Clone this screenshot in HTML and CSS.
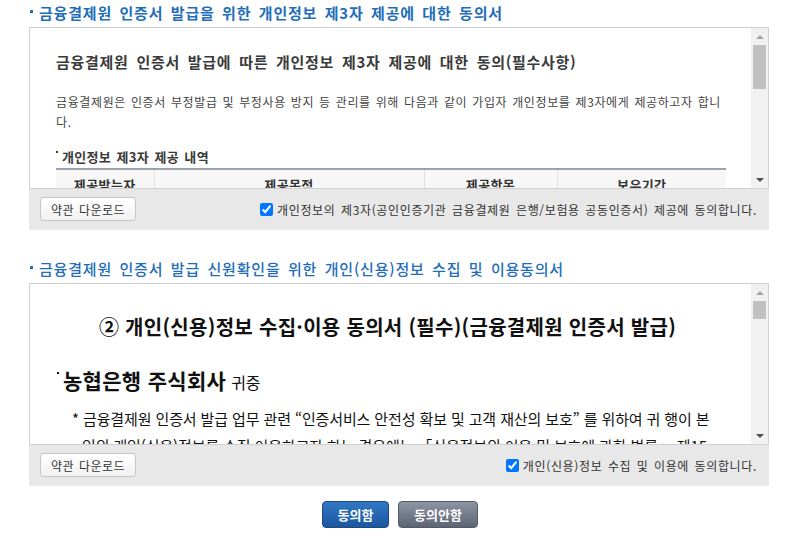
FILE: index.html
```html
<!DOCTYPE html>
<html lang="ko">
<head>
<meta charset="utf-8">
<title>동의서</title>
<link rel="stylesheet" href="styles.css">
</head>
<body>
<div class="page">
  <section class="agree">
    <h2 class="agree-title strong"><span class="title-dot"></span>금융결제원 인증서 발급을 위한 개인정보 제3자 제공에 대한 동의서</h2>
    <div class="agree-box">
      <div class="scroll">
        <div class="scroll-content doc1">
          <h3 class="doc1-head">금융결제원 인증서 발급에 따른 개인정보 제3자 제공에 대한 동의(필수사항)</h3>
          <p class="doc1-text">금융결제원은 인증서 부정발급 및 부정사용 방지 등 관리를 위해 다음과 같이 가입자 개인정보를 제3자에게 제공하고자 합니다.</p>
          <h4 class="doc1-sub"><span class="mini-dot"></span>개인정보 제3자 제공 내역</h4>
          <table class="doc1-table">
            <colgroup><col class="c1"><col class="c2"><col class="c3"><col class="c4"></colgroup>
            <thead>
              <tr><th>제공받는자</th><th>제공목적</th><th>제공항목</th><th>보유기간</th></tr>
            </thead>
          </table>
        </div>
        <div class="scrollbar">
          <div class="sb-btn"><span class="arrow-up"></span></div>
          <div class="sb-track"><div class="sb-thumb thumb1"></div></div>
          <div class="sb-btn"><span class="arrow-down"></span></div>
        </div>
      </div>
      <div class="agree-foot">
        <button class="btn-file" type="button">약관 다운로드</button>
        <label class="chk"><input type="checkbox" checked><span>개인정보의 제3자(공인인증기관 금융결제원 은행/보험용 공동인증서) 제공에 동의합니다.</span></label>
      </div>
    </div>
  </section>

  <section class="agree second">
    <h2 class="agree-title"><span class="title-dot"></span>금융결제원 인증서 발급 신원확인을 위한 개인(신용)정보 수집 및 이용동의서</h2>
    <div class="agree-box">
      <div class="scroll">
        <div class="scroll-content doc2">
          <h3 class="doc2-head">② 개인(신용)정보 수집·이용 동의서 (필수)(금융결제원 인증서 발급)</h3>
          <p class="doc2-to"><span class="mini-dot"></span><strong>농협은행 주식회사</strong> 귀중</p>
          <p class="doc2-text">* 금융결제원 인증서 발급 업무 관련 “인증서비스 안전성 확보 및 고객 재산의 보호” 를 위하여 귀 행이 본인의 개인(신용)정보를 수집·이용하고자 하는 경우에는 「신용정보의 이용 및 보호에 관한 법률」 제15조 제2항, 제32조 제1항, 제33조 및 제34조, 「개인정보 보호법」 제15조 제1항 제1호, 제24조 제1항 제1호에 따라 본인의 동의를 얻어야 합니다.</p>
        </div>
        <div class="scrollbar">
          <div class="sb-btn"><span class="arrow-up"></span></div>
          <div class="sb-track"><div class="sb-thumb thumb2"></div></div>
          <div class="sb-btn"><span class="arrow-down"></span></div>
        </div>
      </div>
      <div class="agree-foot">
        <button class="btn-file" type="button">약관 다운로드</button>
        <label class="chk"><input type="checkbox" checked><span>개인(신용)정보 수집 및 이용에 동의합니다.</span></label>
      </div>
    </div>
  </section>

  <div class="actions">
    <button class="btn-act btn-yes" type="button">동의함</button>
    <button class="btn-act btn-no" type="button">동의안함</button>
  </div>
</div>
</body>
</html>
```

FILE: styles.css
```css
* { box-sizing: border-box; }
html, body { margin: 0; padding: 0; background: #fff; }
body {
  font-family: "Noto Sans CJK KR", "Noto Sans", "Liberation Sans", sans-serif;
  color: #333;
  width: 799px;
  height: 548px;
  overflow: hidden;
}
.page {
  padding: 3px 0 0 29px;
  width: 769px;
}
.agree-title {
  margin: 0 0 4px 0;
  height: 20px;
  font-size: 15px;
  line-height: 20px;
  font-weight: 500;
  color: #1f6eb9;
  word-spacing: 2.5px;
  letter-spacing: 0.8px;
  white-space: nowrap;
  display: flex;
  align-items: center;
}
.agree-title.strong { font-weight: 700; }
.title-dot {
  width: 3px;
  height: 3px;
  background: #1f6eb9;
  margin: 0 6px 3px 1px;
  flex: none;
}
.second { margin-top: 29px; }
.agree-box { width: 740px; }
.scroll {
  display: flex;
  height: 162px;
  border: 1px solid #d0d0d0;
  background: #fff;
}
.scroll-content {
  flex: 1;
  overflow: hidden;
}
.scrollbar {
  width: 17px;
  flex: none;
  background: #f1f1f1;
  display: flex;
  flex-direction: column;
}
.sb-btn {
  height: 17px;
  display: flex;
  align-items: center;
  justify-content: center;
  flex: none;
}
.arrow-up {
  width: 0; height: 0;
  border-left: 4px solid transparent;
  border-right: 4px solid transparent;
  border-bottom: 4px solid #a3a3a3;
}
.arrow-down {
  width: 0; height: 0;
  border-left: 4px solid transparent;
  border-right: 4px solid transparent;
  border-top: 4px solid #505050;
}
.sb-track { flex: 1; padding: 0 1px 0 2px; }
.sb-thumb { background: #c1c1c1; width: 13px; }
.thumb1 { height: 44px; }
.thumb2 { height: 18px; }

/* doc 1 */
.doc1 { padding: 24px 24px 0 26px; }
.doc1-head {
  margin: 0;
  font-size: 15px;
  line-height: 20px;
  font-weight: 700;
  color: #3a3a3a;
  word-spacing: 3px;
  letter-spacing: 0.7px;
  white-space: nowrap;
}
.doc1-text {
  margin: 20px 0 0 0;
  font-size: 12px;
  line-height: 20px;
  color: #444;
  word-spacing: 1px;
  letter-spacing: 0.62px;
}
.doc1-sub {
  margin: 15px 0 1px 0;
  font-size: 13px;
  line-height: 20px;
  font-weight: 700;
  color: #3a3a3a;
  word-spacing: 1.5px;
  letter-spacing: 0.3px;
  display: flex;
  align-items: flex-start;
}
.mini-dot {
  width: 2px;
  height: 2px;
  background: #333;
  margin: 4px 4px 0 0;
  flex: none;
}
.doc1-table {
  width: 670px;
  border-collapse: collapse;
  border-top: 2px solid #9aa2ad;
}
.c1 { width: 98px; }
.c2 { width: 270px; }
.c3 { width: 133px; }
.c4 { width: 169px; }
.doc1-table th {
  background: #f7f7f7;
  border-left: 1px solid #dde1e6;
  font-size: 13px;
  font-weight: 700;
  color: #333;
  letter-spacing: 0.4px;
  line-height: 16px;
  padding: 7px 0 8px;
  text-align: center;
}
.doc1-table th:first-child { border-left: none; }

/* doc 2 */
.doc2 { padding: 29px 32px 0 26px; color: #111; }
.doc2-head {
  margin: 0;
  text-align: center;
  font-size: 20px;
  line-height: 28px;
  font-weight: 700;
  letter-spacing: 0.3px;
  color: #111;
  white-space: nowrap;
}
.doc2-to {
  margin: 25px 0 0 0;
  display: flex;
  align-items: baseline;
  font-size: 16px;
  line-height: 28px;
}
.doc2-to .mini-dot { align-self: flex-start; margin: 6px 4px 0 1px; background: #111; }
.doc2-to strong { font-size: 21px; font-weight: 700; letter-spacing: 0.3px; margin-right: 5px; }
.doc2-text {
  margin: 9px 0 0 0;
  padding-left: 26px;
  text-indent: -10px;
  font-size: 15px;
  line-height: 27px;
  letter-spacing: -0.12px;
  color: #111;
}

/* footer */
.agree-foot {
  height: 41px;
  background: #e8e8e8;
  display: flex;
  align-items: flex-start;
  justify-content: space-between;
  padding: 8px 12px 0 11px;
}
.btn-file {
  width: 96px;
  height: 24px;
  padding: 0;
  border: 1px solid #c6c6c6;
  border-radius: 3px;
  background: linear-gradient(#ffffff, #f1f1f1);
  font-family: inherit;
  font-size: 12px;
  color: #333;
  word-spacing: 1px;
  letter-spacing: 0.5px;
}
.chk {
  display: flex;
  align-items: center;
  height: 24px;
  font-size: 12px;
  color: #333;
  word-spacing: 1.5px;
  letter-spacing: 0.65px;
  white-space: nowrap;
}
.chk input {
  width: 13px;
  height: 13px;
  margin: 0 4px 0 0;
}

/* bottom actions */
.actions {
  width: 740px;
  display: flex;
  justify-content: center;
  gap: 9px;
  margin-top: 15px;
  padding-left: 2px;
}
.btn-act {
  height: 27px;
  padding: 0;
  border-radius: 4px;
  font-family: inherit;
  font-size: 13px;
  font-weight: 700;
  color: #fff;
}
.btn-yes {
  width: 67px;
  border: 1px solid #1d4a7e;
  background: linear-gradient(#3277c4, #1b579f);
}
.btn-no {
  width: 80px;
  border: 1px solid #545a67;
  background: linear-gradient(#8d94a3, #5d6474);
}
```
